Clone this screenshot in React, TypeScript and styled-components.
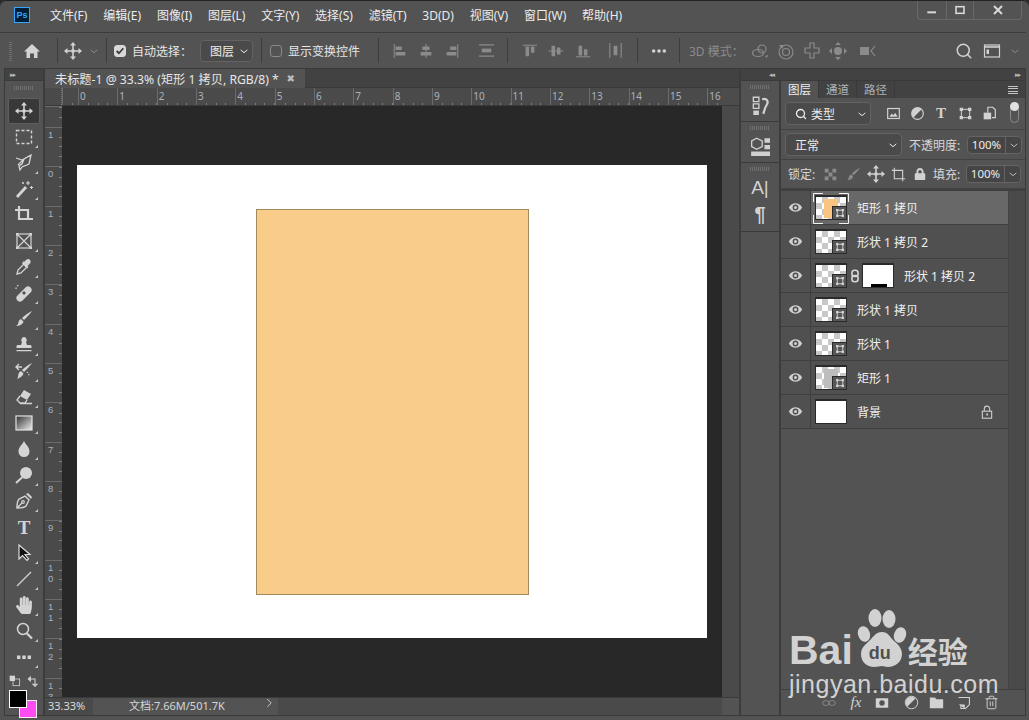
import React from 'react'
import styled, { createGlobalStyle } from 'styled-components'
import { FaHandPaper, FaLock } from 'react-icons/fa'
import { Search, Trash2 } from 'lucide-react'

const GlobalStyle = createGlobalStyle`
  html, body { margin: 0; padding: 0; background: #2b2b2b; }
  * { box-sizing: border-box; }
`

const UI_FONT = `"Noto Sans", "Noto Sans CJK SC", sans-serif`

const Frame = styled.div`
  position: relative;
  width: 1029px;
  height: 720px;
  overflow: hidden;
  display: flex;
  flex-direction: column;
  background: #535353;
  border-radius: 6px 6px 0 0;
  box-shadow: inset 0 1px 0 #222;
  color: #e6e6e6;
  font: 12px ${UI_FONT};
`

/* title bar */
const TitleBar = styled.div`
  height: 33px;
  flex: none;
  display: flex;
  align-items: flex-start;
  padding-left: 14px;
  border-bottom: 1px solid #3c3c3c;
  margin-right: 3px;
`
const PsLogo = styled.div`
  width: 16px;
  height: 16px;
  margin-top: 7px;
  border: 1px solid #31a8ff;
  background: #001e36;
  color: #31a8ff;
  font: 700 9px/14px 'Liberation Sans', sans-serif;
  text-align: center;
`
const Menu = styled.div`
  display: flex;
  gap: 15.8px;
  margin-left: 20px;
  padding-top: 7px;
`
const MenuItem = styled.span`
  line-height: 17px;
  font-size: 12px;
  color: #ececec;
`
const WindowButtons = styled.div`
  margin-left: auto;
  margin-top: 1px;
  margin-right: 4px;
  height: 19px;
  display: flex;
  border: 1px solid #686868;
  border-top: none;
  border-radius: 0 0 4px 4px;
`
const WinBtn = styled.div<{ $w: number }>`
  width: ${p => p.$w}px;
  display: flex;
  align-items: center;
  justify-content: center;
  color: #d8d8d8;
  & + & { border-left: 1px solid #686868; }
`

/* options bar */
const OptionsBar = styled.div`
  height: 36px;
  flex: none;
  margin: 0 3px 0 4px;
  padding-left: 5px;
  display: flex;
  align-items: center;
  border-bottom: 1px solid #3a3a3a;
`
const Grip = styled.div`
  width: 3px;
  height: 20px;
  background: repeating-linear-gradient(0deg, #6e6e6e 0 1px, transparent 1px 2px);
`
const Slot = styled.div<{ $w: number; $ml?: number; $dim?: boolean }>`
  width: ${p => p.$w}px;
  margin-left: ${p => p.$ml ?? 0}px;
  flex: none;
  display: flex;
  align-items: center;
  justify-content: center;
  color: ${p => (p.$dim ? '#8b8b8b' : '#d2d2d2')};
`
const Sep = styled.div<{ $ml?: number }>`
  width: 1px;
  height: 25px;
  flex: none;
  margin-left: ${p => p.$ml ?? 0}px;
  background: #3d3d3d;
`
const Check = styled.div<{ $ml: number; $on?: boolean }>`
  width: 12px;
  height: 12px;
  flex: none;
  margin-left: ${p => p.$ml}px;
  border-radius: 3px;
  border: 1px solid ${p => (p.$on ? '#d8d8d8' : '#8a8a8a')};
  background: ${p => (p.$on ? '#d8d8d8' : 'transparent')};
  color: #3a3a3a;
  display: flex;
  align-items: center;
  justify-content: center;
`
const OptLabel = styled.span<{ $ml: number; $w: number; $dim?: boolean }>`
  margin-left: ${p => p.$ml}px;
  width: ${p => p.$w}px;
  flex: none;
  white-space: nowrap;
  color: ${p => (p.$dim ? '#8b8b8b' : '#e6e6e6')};
`
const SelectBox = styled.div<{ $w: number; $ml?: number; $h?: number }>`
  width: ${p => p.$w}px;
  height: ${p => p.$h ?? 22}px;
  margin-left: ${p => p.$ml ?? 0}px;
  flex: none;
  padding: 0 3px 0 9px;
  display: flex;
  align-items: center;
  gap: 4px;
  white-space: nowrap;
  background: #4a4a4a;
  border: 1px solid #636363;
  border-radius: 4px;
  color: #ececec;
  & > svg:last-child { margin-left: auto; }
`

/* main area */
const Main = styled.div`
  flex: 1;
  min-height: 0;
  margin: 0 3px 4px 4px;
  display: flex;
  border-left: 1px solid #3a3a3a;
  border-bottom: 1px solid #3a3a3a;
`
const ToolColumn = styled.div`
  width: 40px;
  flex: none;
  display: flex;
  flex-direction: column;
  align-items: center;
  border-right: 2px solid #3c3c3c;
`
const DockHeader = styled.div<{ $align?: string }>`
  height: 12px;
  flex: none;
  width: 100%;
  display: flex;
  align-items: center;
  justify-content: ${p => p.$align ?? 'flex-start'};
  padding: 0 5px;
  background: #424242;
  color: #b8b8b8;
  font: 7px/12px 'DejaVu Sans', sans-serif;
  letter-spacing: -1px;
  border-bottom: 1px solid #3a3a3a;
`
const CollapseLeft = styled.span`
  margin-left: 23px;
`
const ToolGrip = styled.div`
  width: 20px;
  height: 4px;
  margin: 5px 0 8px;
  flex: none;
  background: repeating-linear-gradient(90deg, #6f6f6f 0 1px, transparent 1px 2px);
`
const ToolBtn = styled.div<{ $active?: boolean }>`
  position: relative;
  width: 32px;
  height: 26px;
  flex: none;
  display: flex;
  align-items: center;
  justify-content: center;
  color: #d4d4d4;
  border-radius: 3px;
  background: ${p => (p.$active ? '#383838' : 'transparent')};
  box-shadow: ${p => (p.$active ? 'inset 0 0 0 1px #5f5f5f' : 'none')};
`
const Corner = styled.span`
  position: absolute;
  right: 2px;
  bottom: 2px;
  width: 0;
  height: 0;
  border-left: 3px solid transparent;
  border-bottom: 3px solid #c4c4c4;
`
const ToolT = styled.span<{ $size?: number }>`
  font: 700 ${p => p.$size ?? 19}px/${p => p.$size ?? 19}px 'Liberation Serif', serif;
`
const Swaps = styled.div`
  display: flex;
  align-items: center;
  gap: 6px;
  margin-top: 5px;
  color: #d4d4d4;
`
const Colors = styled.div`
  position: relative;
  width: 28px;
  height: 28px;
  margin-top: 3px;
  align-self: flex-start;
  margin-left: 4px;
`
const BgSwatch = styled.div`
  position: absolute;
  left: 10px;
  top: 10px;
  width: 18px;
  height: 18px;
  background: #ff4bf2;
  border: 1px solid #eee;
`
const FgSwatch = styled.div`
  position: absolute;
  left: 0;
  top: 0;
  width: 18px;
  height: 18px;
  background: #000;
  border: 1px solid #fff;
`

/* document */
const Doc = styled.div`
  width: 696px;
  flex: none;
  display: flex;
  flex-direction: column;
  border-right: 2px solid #3c3c3c;
`
const TabBar = styled.div`
  height: 19px;
  flex: none;
  display: flex;
  background: #424242;
  border-bottom: 1px solid #3a3a3a;
`
const Tab = styled.div`
  width: 260px;
  height: 19px;
  padding: 0 10px;
  display: flex;
  align-items: center;
  justify-content: space-between;
  background: #535353;
  font-size: 12.2px;
  white-space: nowrap;
`
const TabClose = styled.span`
  color: #bdbdbd;
  font: 700 10px 'DejaVu Sans', sans-serif;
`
const RulerRow = styled.div`
  height: 18px;
  flex: none;
  display: flex;
  border-bottom: 1px solid #3a3a3a;
`
const RulerCorner = styled.div`
  width: 17px;
  flex: none;
  background: #4a4a4a;
  border-right: 1px dotted #777;
`
const TopRuler = styled.div`
  width: 660px;
  flex: none;
  overflow: hidden;
  display: flex;
  background: #4a4a4a;
`
const TopCell = styled.div<{ $w: number }>`
  width: ${p => p.$w}px;
  flex: none;
  padding-left: 1px;
  color: #aab2bc;
  font: 10px/16px ${UI_FONT};
  border-left: 1px solid #6b6b6b;
  background: repeating-linear-gradient(90deg, transparent 0 8.8px, #7d7d7d 8.8px 9.83px) 0 100% / 100% 2px no-repeat;
`
const RulerGutter = styled.div`
  flex: 1;
  background: #4c4c4c;
`
const DocBody = styled.div`
  flex: 1;
  min-height: 0;
  display: flex;
`
const LeftRuler = styled.div`
  width: 17px;
  flex: none;
  overflow: hidden;
  background: #4a4a4a;
`
const LeftCell = styled.div<{ $h: number }>`
  height: ${p => p.$h}px;
  width: 17px;
  padding: 1px 0 0 3px;
  color: #aab2bc;
  font: 9.5px/11px 'Liberation Sans', sans-serif;
  border-top: 1px solid #6b6b6b;
  background: repeating-linear-gradient(0deg, transparent 0 8.8px, #7d7d7d 8.8px 9.83px) 100% 0 / 3px 100% no-repeat;
`
const Digit = styled.div``
const Pasteboard = styled.div`
  width: 660px;
  flex: none;
  display: flex;
  align-items: center;
  justify-content: center;
  background: #282828;
`
const Canvas = styled.div`
  width: 630px;
  height: 473px;
  padding-top: 1px;
  display: flex;
  align-items: center;
  justify-content: center;
  background: #fff;
`
const ShapeRect = styled.div`
  width: 273px;
  height: 386px;
  background: #f9cd89;
  border: 1px solid #a08a5e;
`
const ScrollGutter = styled.div`
  flex: 1;
  background: #4a4a4a;
`
const StatusBar = styled.div`
  height: 18px;
  flex: none;
  display: flex;
  background: #4a4a4a;
  border-top: 1px solid #3a3a3a;
  font-size: 11px;
  line-height: 16px;
`
const Zoom = styled.div`
  width: 48px;
  padding-left: 3px;
  color: #dcdcdc;
`
const DocInfo = styled.div`
  width: 185px;
  padding-left: 36px;
  background: #535353;
  color: #d6d6d6;
  display: flex;
  justify-content: space-between;
  padding-right: 4px;
`
const StatusRest = styled.div`
  flex: 1;
  background: #4a4a4a;
  border-right: 17px solid #535353;
`

/* docks */
const Docks = styled.div`
  flex: 1;
  min-width: 0;
  display: flex;
  flex-direction: column;
  border-right: 1px solid #3a3a3a;
`
const DockBody = styled.div`
  flex: 1;
  min-height: 0;
  display: flex;
`
const Strip = styled.div`
  width: 40px;
  flex: none;
  display: flex;
  flex-direction: column;
  border-right: 2px solid #3c3c3c;
`
const StripGroup = styled.div<{ $h: number }>`
  height: ${p => p.$h}px;
  flex: none;
  display: flex;
  flex-direction: column;
  align-items: center;
  border-bottom: 1px solid #3a3a3a;
  color: #d0d0d0;
`
const StripGrip = styled(ToolGrip)`
  margin: 4px 0 6px;
`
const CharGlyph = styled.span<{ $mt: number; $bold?: boolean }>`
  margin-top: ${p => p.$mt}px;
  color: #d2d2d2;
  font: ${p => (p.$bold ? '700 20px/20px' : '400 19px/20px')} 'Liberation Sans', sans-serif;
`
const Panel = styled.div`
  flex: 1;
  min-width: 0;
  display: flex;
  flex-direction: column;
`
const Tabs = styled.div`
  height: 17px;
  flex: none;
  display: flex;
  align-items: stretch;
  background: #424242;
`
const PanelTab = styled.div<{ $active?: boolean }>`
  width: 38px;
  text-align: center;
  line-height: 17px;
  font-size: 11.5px;
  color: ${p => (p.$active ? '#f0f0f0' : '#aeb4ba')};
  background: ${p => (p.$active ? '#535353' : 'transparent')};
  border-right: 1px solid #3a3a3a;
`
const TabMenu = styled.div`
  margin: 5px 7px 0 auto;
  width: 10px;
  height: 8px;
  background: repeating-linear-gradient(0deg, #c4c4c4 0 1px, transparent 1px 2.4px);
`
const PanelRow = styled.div<{ $h: number }>`
  height: ${p => p.$h}px;
  flex: none;
  display: flex;
  align-items: center;
  padding-left: 4px;
  border-bottom: 1px solid #424242;
  color: #d8d8d8;
`
const FilterIcons = styled.div`
  display: flex;
  margin-left: 10px;
`
const Toggle = styled.div`
  position: relative;
  width: 9px;
  height: 19px;
  margin-left: 9px;
  border-radius: 5px;
  border: 1px solid #8a8a8a;
`
const ToggleKnob = styled.span`
  position: absolute;
  left: -1px;
  top: -3px;
  width: 9px;
  height: 9px;
  border-radius: 50%;
  background: #e2e2e2;
`
const FieldLabel = styled.span<{ $ml: number; $w: number }>`
  margin-left: ${p => p.$ml}px;
  width: ${p => p.$w}px;
  flex: none;
  white-space: nowrap;
`
const NumberField = styled.div`
  width: 55px;
  height: 18px;
  margin-left: 3px;
  flex: none;
  display: flex;
  background: #454545;
  border: 1px solid #646464;
  border-radius: 4px;
  font-size: 11.5px;
  line-height: 16px;
  color: #ececec;
`
const NumberValue = styled.span`
  width: 38px;
  text-align: center;
  border-right: 1px solid #646464;
`
const NumberArrow = styled.span`
  flex: 1;
  display: flex;
  align-items: center;
  justify-content: center;
  color: #b8b8b8;
`
const LockIcons = styled.div`
  display: flex;
  margin-left: 1px;
`
const ListArea = styled.div`
  flex: 1;
  min-height: 0;
  display: flex;
  border-top: 2px solid #3f3f3f;
`
const LayerList = styled.div`
  width: 227px;
  flex: none;
`
const ListGutter = styled.div`
  flex: 1;
  background: #4a4a4a;
  border-left: 1px solid #444;
`
const Row = styled.div<{ $selected?: boolean }>`
  height: 34px;
  display: flex;
  align-items: center;
  background: ${p => (p.$selected ? '#686868' : '#505050')};
  border-bottom: 1px solid #3f3f3f;
  font-size: 12px;
  color: #f0f0f0;
  white-space: nowrap;
`
const EyeCell = styled.div`
  width: 30px;
  height: 100%;
  flex: none;
  display: flex;
  align-items: center;
  justify-content: center;
  color: #d0d0d0;
  background: #505050;
  border-right: 1px solid #3f3f3f;
`
const Thumb = styled.div<{ $plain?: boolean; $ml?: number }>`
  position: relative;
  width: 32px;
  height: 25px;
  flex: none;
  margin-left: ${p => p.$ml ?? 4}px;
  border: 1px solid #2a2a2a;
  border-top-width: 2px;
  background: ${p =>
    p.$plain ? '#fff' : 'repeating-conic-gradient(#c8c8c8 0 25%, #fff 0 50%) 0 0 / 12px 12px'};
`
const ThumbFill = styled.span<{ $color: string }>`
  position: absolute;
  left: 8px;
  top: 2px;
  width: 14px;
  height: 19px;
  background: ${p => p.$color};
`
const Badge = styled.span`
  position: absolute;
  right: -1px;
  bottom: -1px;
  width: 15px;
  height: 14px;
  display: flex;
  align-items: center;
  justify-content: center;
  background: #575757;
  border: 1px solid #2a2a2a;
  color: #d8d8d8;
`
const MaskBar = styled.span`
  position: absolute;
  left: 8px;
  bottom: 0;
  width: 16px;
  height: 3px;
  background: #000;
`
const Brackets = styled.svg`
  position: absolute;
  left: -3px;
  top: -4px;
  width: 36px;
  height: 31px;
  fill: none;
  stroke: #f2f2f2;
`
const Chain = styled.span`
  width: 15px;
  flex: none;
  display: flex;
  justify-content: center;
  color: #d8d8d8;
`
const LayerName = styled.span<{ $ml?: number }>`
  margin-left: ${p => p.$ml ?? 10}px;
`
const LayerLock = styled.span`
  margin-left: auto;
  margin-right: 14px;
  color: #cfcfcf;
  display: flex;
`
const PanelFooter = styled.div`
  height: 26px;
  flex: none;
  display: flex;
  align-items: center;
  padding-left: 41px;
  border-top: 1px solid #3f3f3f;
  background: #535353;
  color: #d8d8d8;
`
const FooterFx = styled.span`
  font: italic 15px 'Liberation Serif', serif;
`

/* watermark */
const Watermark = styled.div`
  position: absolute;
  left: 789px;
  top: 609px;
  width: 190px;
  color: #d2d2d2;
  pointer-events: none;
`
const MarkTop = styled.div`
  display: flex;
  align-items: flex-end;
  height: 60px;
`
const MarkBai = styled.span`
  font: 700 41px/38px 'Liberation Sans', sans-serif;
`
const MarkPaw = styled.div`
  position: relative;
  width: 52px;
  height: 60px;
  margin-left: 2px;
  flex: none;
`
const PawSvg = styled.svg`
  display: block;
  width: 52px;
  height: 60px;
  fill: currentColor;
`
const MarkDu = styled.span`
  position: absolute;
  left: 14px;
  top: 35px;
  color: #4f4f4f;
  font: 700 18px/18px 'Liberation Sans', sans-serif;
`
const MarkJy = styled.span`
  margin-left: 1px;
  font: 700 30px/38px 'Noto Sans CJK SC', sans-serif;
`
const MarkUrl = styled.div`
  margin-top: 2px;
  font: 25px/26px 'Liberation Sans', sans-serif;
  letter-spacing: 0.5px;
  white-space: nowrap;
`

const Svg = styled.svg.attrs<{ $s?: number }>(p => ({ viewBox: '0 0 18 18', width: p.$s ?? 18, height: p.$s ?? 18 }))<{ $s?: number }>`
  display: block;
  flex: none;
  fill: none;
  stroke: currentColor;
  stroke-width: 1.2;
`
const Solid = { fill: 'currentColor', stroke: 'none' }

const Chevron = () => (
  <Svg $s={10}>
    <path d="M3 7l6 5 6-5" strokeWidth={1.8} />
  </Svg>
)
const MoveIcon = () => (
  <Svg>
    <path d="M9 2v14M2 9h14" strokeWidth={1.6} />
    <path {...Solid} d="M9 0l3 3.500H6zM9 18l3-3.500H6zM0 9l3.500-3v6zM18 9l-3.500-3v6z" />
    <rect {...Solid} x="7.500" y="7.500" width="3" height="3" />
  </Svg>
)
const PathBox = ({ s = 12 }: { s?: number }) => (
  <Svg $s={s}>
    <rect x="4" y="4" width="10" height="10" strokeWidth={s < 14 ? 1.6 : 1.2} />
    <path {...Solid} d="M2 2h4v4H2zM12 2h4v4h-4zM2 12h4v4H2zM12 12h4v4h-4z" />
  </Svg>
)

const toolIcons: React.ReactNode[] = [
  <MoveIcon key="move" />,
  <Svg key="marquee"><rect x="1.500" y="2.500" width="15" height="13" strokeDasharray="3 2" strokeWidth={1.4} /></Svg>,
  <Svg key="lasso"><path d="M1 4l6 2 9-5-2 9-7 3-2 3-1-4 3-2 2-5-6 6" strokeWidth={1.3} /></Svg>,
  <Svg key="wand">
    <path d="M2 17L11 7" strokeWidth={2.8} />
    <path d="M13 1v4M11 3h4M16.500 6v3M15 7.500h3M8 2v2M7 3h2" strokeWidth={1.1} />
  </Svg>,
  <Svg key="crop"><path d="M0 4h13v10M4 0v13h14" strokeWidth={2.2} /></Svg>,
  <Svg key="frame">
    <rect x="2" y="2" width="14" height="14" />
    <path d="M2 2l14 14M16 2L2 16" />
    <path {...Solid} d="M1 1h2.500v2.500H1zM14.500 1H17v2.500h-2.500zM1 14.500h2.500V17H1zM14.500 14.500H17V17h-2.500z" />
  </Svg>,
  <Svg key="dropper">
    <path d="M2 16l1-4 6-6 3 3-6 6z" strokeWidth={1.3} />
    <path {...Solid} d="M9 4l2-2c1.500-1.500 3-1.500 4 0s1 2.500-.5 4l-2 2 1 1-1.500 1.500-5-5L8.500 3z" />
  </Svg>,
  <Svg key="heal">
    <path {...Solid} fillRule="evenodd" d="M2 12l9-9c1-1 3-1 4 0l1 1c1 1 1 3 0 4l-9 9c-1 1-3 1-4 0l-1-1c-1-1-1-3 0-4zM9 7l-2 2 2 2 2-2z" />
    <path d="M1 5a4 4 0 0 1 4-4" strokeDasharray="1.500 1.500" />
  </Svg>,
  <Svg key="brush">
    <path {...Solid} d="M17 1c-2 3-5 6-8 9l-2-2c3-3 6-5 10-7zM6 9l2.500 2.500C8 14 5 16 1 16c2-1 2-2 2.500-4 .3-1.500 1.200-2.500 2.500-3z" />
  </Svg>,
  <Svg key="stamp">
    <path {...Solid} d="M9 1a3 3 0 0 1 2 5l1 3h3c1 0 1.500.5 1.500 1.500V12h-15v-1.500C1.500 9.500 2 9 3 9h3l1-3a3 3 0 0 1 2-5zM1.500 14h15v1.300h-15z" />
  </Svg>,
  <Svg key="history">
    <path {...Solid} d="M17 1c-2 3-5 6-8 9l-2-2c3-3 6-5 10-7zM6 9l2.500 2.500C8 14 5 16 2 17c1-1 1-3 1.500-5 .3-1.500 1.200-2.500 2.500-3z" />
    <path d="M1 5h6M4 2L1 5l3 3" strokeWidth={1.4} />
    <path d="M12 10a5 5 0 0 1 2 5" strokeDasharray="1.200 1.500" />
  </Svg>,
  <Svg key="eraser">
    <path {...Solid} d="M9 2l7 4-4 6-7-4z" />
    <path d="M5 8l-3 4 3 3h5l2-3M5 15.500h12" strokeWidth={1.3} />
  </Svg>,
  <Svg key="gradient">
    <defs>
      <linearGradient id="toolGrad" x1="0" x2="1" y1="0" y2="1">
        <stop offset="0" stopColor="#2e2e2e" />
        <stop offset="1" stopColor="#f0f0f0" />
      </linearGradient>
    </defs>
    <rect x="1" y="2" width="16" height="14" fill="url(#toolGrad)" stroke="#e2e2e2" />
  </Svg>,
  <Svg key="drop"><path {...Solid} d="M9 1c2 4 5.500 6 5.500 10.500a5.500 5.500 0 0 1-11 0C3.500 7 7 5 9 1z" /></Svg>,
  <Svg key="dodge">
    <circle {...Solid} cx="11" cy="7" r="6" />
    <path d="M7 11.500L1 17" strokeWidth={2} />
  </Svg>,
  <Svg key="pen">
    <path d="M2 16c0-4 0-7 2-9l6-3 4 4-3 6c-2 2-5 2-9 2zM2 16l5-5" strokeWidth={1.4} />
    <circle cx="8" cy="10" r="1.300" />
    <path {...Solid} d="M11 2l2-1 4 4-1 2z" />
  </Svg>,
  <ToolT key="type">T</ToolT>,
  <Svg key="select"><path d="M4 1v14l3.500-3.500 4.500 5 1.500-1.500-3.500-4.500H15z" fill="#111" stroke="#ddd" /></Svg>,
  <Svg key="line"><path d="M2 16L16 2" strokeWidth={1.3} /></Svg>,
  <FaHandPaper key="hand" size={18} />,
  <Svg key="zoom">
    <circle cx="8" cy="7" r="5.500" strokeWidth={1.5} />
    <path d="M12 11.500l5 5" strokeWidth={2.2} />
  </Svg>,
  <Svg key="more"><path {...Solid} d="M2 7.500h3.400v3.400H2zM7.300 7.500h3.400v3.400H7.300zM12.600 7.500H16v3.400h-3.400z" /></Svg>,
]
const noCorner = new Set([0, 4, 16])

const Eye = () => (
  <Svg $s={15}>
    <path {...Solid} fillRule="evenodd" d="M1 9c2-3.500 5-5 8-5s6 1.500 8 5c-2 3.500-5 5-8 5s-6-1.500-8-5zm8-3.500a3.500 3.500 0 1 0 0 7 3.500 3.500 0 0 0 0-7z" />
    <circle {...Solid} cx="9" cy="9" r="1.800" />
  </Svg>
)

type LayerRow = { name: string; selected?: boolean; fill?: string; mask?: boolean; plain?: boolean }
const layers: LayerRow[] = [
  { name: '矩形 1 拷贝', selected: true, fill: '#fac580' },
  { name: '形状 1 拷贝 2' },
  { name: '形状 1 拷贝 2', mask: true },
  { name: '形状 1 拷贝' },
  { name: '形状 1' },
  { name: '矩形 1', fill: '#bdbdbd' },
  { name: '背景', plain: true },
]

const menus = ['文件(F)', '编辑(E)', '图像(I)', '图层(L)', '文字(Y)', '选择(S)', '滤镜(T)', '3D(D)', '视图(V)', '窗口(W)', '帮助(H)']
const rulerNums = Array.from({ length: 17 }, (_, i) => i)
const sideNums = ['1', '0', '1', '2', '3', '4', '5', '6', '7', '8', '9', '10', '11', '12', '13']

export default function App() {
  return (
    <Frame>
      <GlobalStyle />
      <TitleBar>
        <PsLogo>Ps</PsLogo>
        <Menu>
          {menus.map(m => (
            <MenuItem key={m}>{m}</MenuItem>
          ))}
        </Menu>
        <WindowButtons>
          <WinBtn $w={28}>
            <Svg $s={12}><path {...Solid} d="M2 11h13v3H2z" /></Svg>
          </WinBtn>
          <WinBtn $w={27}>
            <Svg $s={12}><rect x="3" y="4" width="12" height="10" strokeWidth={2.4} /></Svg>
          </WinBtn>
          <WinBtn $w={48}>
            <Svg $s={12}><path d="M3 3l12 12M15 3L3 15" strokeWidth={3} /></Svg>
          </WinBtn>
        </WindowButtons>
      </TitleBar>

      <OptionsBar>
        <Grip />
        <Slot $w={40}>
          <Svg><path {...Solid} d="M9 2l8 7.500h-2.500V16h-3.500v-4.500H7V16H3.500V9.500H1z" /></Svg>
        </Slot>
        <Sep $ml={5} />
        <Slot $w={30}><MoveIcon /></Slot>
        <Slot $w={12} $dim><Chevron /></Slot>
        <Sep $ml={6} />
        <Check $ml={7} $on>
          <Svg $s={10}><path d="M3 9l4 4 8-9" strokeWidth={3.2} /></Svg>
        </Check>
        <OptLabel $ml={6} $w={54}>自动选择：</OptLabel>
        <SelectBox $ml={14} $w={53}>
          图层
          <Chevron />
        </SelectBox>
        <Sep $ml={8} />
        <Check $ml={8} />
        <OptLabel $ml={6} $w={70}>显示变换控件</OptLabel>
        <Sep $ml={20} />
        <Slot $w={26} $ml={8} $dim><Svg $s={16}><path d="M2.500 1v16" /><path {...Solid} d="M4 4h7v4H4zM4 10h11v4H4z" /></Svg></Slot>
        <Slot $w={26} $dim><Svg $s={16}><path d="M9 1v16" /><path {...Solid} d="M5 4h8v4H5zM3 10h12v4H3z" /></Svg></Slot>
        <Slot $w={26} $dim><Svg $s={16}><path d="M15.500 1v16" /><path {...Solid} d="M7 4h7v4H7zM3 10h11v4H3z" /></Svg></Slot>
        <Slot $w={26} $ml={8} $dim><Svg $s={17}><path d="M1 3h16M1 15h16" /><path {...Solid} d="M4 7h10v4H4z" /></Svg></Slot>
        <Sep $ml={8} />
        <Slot $w={26} $ml={9} $dim><Svg $s={16}><path d="M1 2.500h16" /><path {...Solid} d="M4 4h4v11H4zM10 4h4v7h-4z" /></Svg></Slot>
        <Slot $w={26} $dim><Svg $s={16}><path d="M1 9h16" /><path {...Solid} d="M4 3h4v12H4zM10 5h4v8h-4z" /></Svg></Slot>
        <Slot $w={26} $ml={1} $dim><Svg $s={16}><path d="M1 15.500h16" /><path {...Solid} d="M4 3h4v11H4zM10 7h4v7h-4z" /></Svg></Slot>
        <Slot $w={26} $ml={6} $dim><Svg $s={17}><path d="M3 1v16M15 1v16" /><path {...Solid} d="M7 4h4v10H7z" /></Svg></Slot>
        <Sep $ml={9} />
        <Slot $w={41}><Svg $s={16}><path {...Solid} d="M1 9a2 2 0 1 0 4 0 2 2 0 0 0-4 0zM7 9a2 2 0 1 0 4 0 2 2 0 0 0-4 0zM13 9a2 2 0 1 0 4 0 2 2 0 0 0-4 0z" /></Svg></Slot>
        <Sep />
        <OptLabel $ml={9} $w={50} $dim>3D 模式：</OptLabel>
        <Slot $w={26} $ml={8} $dim><Svg><ellipse cx="7" cy="11" rx="5.500" ry="3.500" /><circle cx="11" cy="7" r="4" /><path {...Solid} d="M14 14l3-1-1 3z" /></Svg></Slot>
        <Slot $w={26} $dim><Svg><circle cx="9" cy="10" r="7" /><circle cx="9" cy="10" r="3.500" /><path {...Solid} d="M2 3l5 0-2 4z" /></Svg></Slot>
        <Slot $w={26} $dim><Svg><path d="M7 1h4v5h5v5h-5v5H7v-5H2V6h5z" /></Svg></Slot>
        <Slot $w={26} $dim><Svg><circle {...Solid} cx="9" cy="9" r="4" /><path {...Solid} d="M9 0l3 3H6zM9 18l3-3H6zM0 9l3-3v6zM18 9l-3-3v6z" /></Svg></Slot>
        <Slot $w={26} $ml={4} $dim><Svg><path {...Solid} d="M1 5h9v8H1z" /><path d="M16 4l-4 5 4 5" /></Svg></Slot>
        <Slot $w={26} $ml={70}><Search size={18} strokeWidth={2} /></Slot>
        <Slot $w={26} $ml={2}>
          <Svg><rect x="1.500" y="3" width="15" height="12" /><path d="M1.500 5h15" strokeWidth={1.6} /><path {...Solid} d="M3.500 7.500H6V12H3.500z" /></Svg>
        </Slot>
        <Slot $w={14} $ml={3} $dim><Chevron /></Slot>
      </OptionsBar>

      <Main>
        <ToolColumn>
          <DockHeader>▸▸</DockHeader>
          <ToolGrip />
          {toolIcons.map((icon, i) => (
            <ToolBtn key={i} $active={i === 0}>
              {icon}
              {!noCorner.has(i) && <Corner />}
            </ToolBtn>
          ))}
          <Swaps>
            <Svg $s={12}><path {...Solid} d="M1 1h8v8H1z" /><rect x="6" y="6" width="10" height="10" /></Svg>
            <Svg $s={12}><path d="M2 6h10v8M12 17l-3-3h6zM2 6l3-3v6z" strokeWidth={1.6} /></Svg>
          </Swaps>
          <Colors>
            <BgSwatch />
            <FgSwatch />
          </Colors>
        </ToolColumn>

        <Doc>
          <TabBar>
            <Tab>
              未标题-1 @ 33.3% (矩形 1 拷贝, RGB/8) *
              <TabClose>✖</TabClose>
            </Tab>
          </TabBar>
          <RulerRow>
            <RulerCorner />
            <TopRuler>
              <TopCell $w={16} />
              {rulerNums.map(n => (
                <TopCell key={n} $w={39.33}>{n}</TopCell>
              ))}
            </TopRuler>
            <RulerGutter />
          </RulerRow>
          <DocBody>
            <LeftRuler>
              <LeftCell $h={21} />
              {sideNums.map((n, i) => (
                <LeftCell key={i} $h={39.33}>
                  {n.split('').map((d, j) => (
                    <Digit key={j}>{d}</Digit>
                  ))}
                </LeftCell>
              ))}
            </LeftRuler>
            <Pasteboard>
              <Canvas>
                <ShapeRect />
              </Canvas>
            </Pasteboard>
            <ScrollGutter />
          </DocBody>
          <StatusBar>
            <Zoom>33.33%</Zoom>
            <DocInfo>
              文档:7.66M/501.7K
              <Svg $s={10}><path d="M6 2l7 7-7 7" strokeWidth={1.6} /></Svg>
            </DocInfo>
            <StatusRest />
          </StatusBar>
        </Doc>

        <Docks>
          <DockHeader $align="space-between">
            <CollapseLeft>◂◂</CollapseLeft>
            <span>▸▸</span>
          </DockHeader>
          <DockBody>
            <Strip>
              <StripGroup $h={41}>
                <StripGrip />
                <Svg $s={20}>
                  <path d="M3 2h5v4H3zM3 8h5v4H3z" />
                  <path {...Solid} d="M3 14h5v5H3z" />
                  <path d="M11 4c4-2 6 2 4 5s-2 5-3 8" strokeWidth={2} />
                </Svg>
              </StripGroup>
              <StripGroup $h={41}>
                <StripGrip />
                <Svg $s={20}>
                  <path d="M6 2l5 2.500v5L6 12 1.500 9.500v-5z" />
                  <path {...Solid} d="M13 2h5v4h-5zM13 8h5v4h-5zM1 14h17v4H1z" />
                </Svg>
              </StripGroup>
              <StripGroup $h={69}>
                <StripGrip />
                <CharGlyph $mt={1}>A|</CharGlyph>
                <CharGlyph $mt={6} $bold>¶</CharGlyph>
              </StripGroup>
            </Strip>
            <Panel>
              <Tabs>
                <PanelTab $active>图层</PanelTab>
                <PanelTab>通道</PanelTab>
                <PanelTab>路径</PanelTab>
                <TabMenu />
              </Tabs>
              <PanelRow $h={32}>
                <SelectBox $w={86} $h={23}>
                  <Search size={12} strokeWidth={2.6} />
                  类型
                  <Chevron />
                </SelectBox>
                <FilterIcons>
                  <Slot $w={24}><Svg $s={15}><rect x="2" y="3" width="14" height="12" strokeWidth={1.4} /><path {...Solid} d="M4 13l3-4 2 2 2-3 3 5z" /></Svg></Slot>
                  <Slot $w={24}><Svg $s={15}><circle cx="9" cy="9" r="7" strokeWidth={1.4} /><path {...Solid} d="M14 4a7 7 0 0 0-9.900 9.900z" /></Svg></Slot>
                  <Slot $w={24}><ToolT $size={15}>T</ToolT></Slot>
                  <Slot $w={24}><PathBox s={15} /></Slot>
                  <Slot $w={24}><Svg $s={15}><path d="M7 8V1.500h6l3 3V14h-4" strokeWidth={1.4} /><path {...Solid} d="M2 8h9v8H2z" /></Svg></Slot>
                </FilterIcons>
                <Toggle>
                  <ToggleKnob />
                </Toggle>
              </PanelRow>
              <PanelRow $h={30}>
                <SelectBox $w={117} $h={23}>
                  正常
                  <Chevron />
                </SelectBox>
                <FieldLabel $ml={7} $w={55}>不透明度:</FieldLabel>
                <NumberField>
                  <NumberValue>100%</NumberValue>
                  <NumberArrow><Chevron /></NumberArrow>
                </NumberField>
              </PanelRow>
              <PanelRow $h={29}>
                <FieldLabel $ml={3} $w={30}>锁定:</FieldLabel>
                <LockIcons>
                  <Slot $w={23} $dim>
                    <Svg $s={13}><path {...Solid} d="M1 1h5.300v5.300H1zM11.700 1H17v5.300h-5.300zM6.300 6.300h5.400v5.400H6.300zM1 11.700h5.300V17H1zM11.700 11.700H17V17h-5.300z" /></Svg>
                  </Slot>
                  <Slot $w={23} $dim>
                    <Svg $s={15}><path {...Solid} d="M17 1c-2 3-5 6-8 9l-2-2c3-3 6-5 10-7zM6 9l2.500 2.500C8 14 5 16 1 16c2-1 2-2 2.500-4 .3-1.500 1.200-2.500 2.500-3z" /></Svg>
                  </Slot>
                  <Slot $w={22}><MoveIcon /></Slot>
                  <Slot $w={22}>
                    <Svg $s={15}><path d="M4 1v13h13M1 4h13v13" strokeWidth={1.3} /></Svg>
                  </Slot>
                  <Slot $w={22}><FaLock size={12} /></Slot>
                </LockIcons>
                <FieldLabel $ml={2} $w={30}>填充:</FieldLabel>
                <NumberField>
                  <NumberValue>100%</NumberValue>
                  <NumberArrow><Chevron /></NumberArrow>
                </NumberField>
              </PanelRow>
              <ListArea>
                <LayerList>
                  {layers.map((l, i) => (
                    <Row key={i} $selected={l.selected}>
                      <EyeCell><Eye /></EyeCell>
                      <Thumb $plain={l.plain}>
                        {l.fill && <ThumbFill $color={l.fill} />}
                        {!l.plain && (
                          <Badge><PathBox s={10} /></Badge>
                        )}
                        {l.selected && (
                          <Brackets viewBox="0 0 36 31">
                            <path d="M.5 9V.5H10M26 .5h9.500V9M.5 22v8.500H10M26 30.500h9.500V22" />
                          </Brackets>
                        )}
                      </Thumb>
                      {l.mask && (
                        <>
                          <Chain>
                            <Svg $s={14}>
                              <rect x="5" y="1.500" width="8" height="8" rx="3.500" strokeWidth={2} />
                              <rect x="5" y="8.500" width="8" height="8" rx="3.500" strokeWidth={2} />
                            </Svg>
                          </Chain>
                          <Thumb $plain $ml={0}>
                            <MaskBar />
                          </Thumb>
                        </>
                      )}
                      <LayerName>{l.name}</LayerName>
                      {l.plain && (
                        <LayerLock>
                          <Svg $s={14}>
                            <rect x="3" y="8" width="12" height="9" strokeWidth={1.4} />
                            <path d="M5.500 8V5a3.500 3.500 0 0 1 7 0v3" strokeWidth={1.4} />
                            <rect {...Solid} x="8" y="11" width="2.400" height="2.400" />
                          </Svg>
                        </LayerLock>
                      )}
                    </Row>
                  ))}
                </LayerList>
                <ListGutter />
              </ListArea>
              <PanelFooter>
                <Slot $w={14} $dim>
                  <Svg $s={14}><rect x="1" y="6" width="8" height="6" rx="3" /><rect x="9" y="6" width="8" height="6" rx="3" /></Svg>
                </Slot>
                <Slot $w={20} $ml={10}><FooterFx>fx</FooterFx></Slot>
                <Slot $w={20} $ml={6}>
                  <Svg $s={14}><path {...Solid} fillRule="evenodd" d="M1 3h16v12H1zM9 5.500a3.500 3.500 0 1 0 0 7 3.500 3.500 0 0 0 0-7z" /></Svg>
                </Slot>
                <Slot $w={20} $ml={9}>
                  <Svg $s={15}><circle cx="9" cy="9" r="7.500" strokeWidth={1.2} /><path {...Solid} d="M14 4a7 7 0 0 0-9.900 9.900z" /></Svg>
                </Slot>
                <Slot $w={20} $ml={5}>
                  <Svg $s={15}><path {...Solid} d="M1 3h6l2 2h8v11H1z" /></Svg>
                </Slot>
                <Slot $w={20} $ml={8}>
                  <Svg $s={14}><path d="M2 2h14v9l-5 5H5V11" strokeWidth={1.4} /><path {...Solid} d="M2 11h8v5z" /></Svg>
                </Slot>
                <Slot $w={20} $ml={7}><Trash2 size={15} strokeWidth={1.5} /></Slot>
              </PanelFooter>
            </Panel>
          </DockBody>
        </Docks>
      </Main>

      <Watermark>
        <MarkTop>
          <MarkBai>Bai</MarkBai>
          <MarkPaw>
            <PawSvg viewBox="0 0 52 60">
              <ellipse cx="9" cy="25" rx="6" ry="8" transform="rotate(-18 9 25)" />
              <ellipse cx="20" cy="9" rx="6.500" ry="9" />
              <ellipse cx="34" cy="10" rx="6.500" ry="9" />
              <ellipse cx="45" cy="26" rx="6" ry="8" transform="rotate(18 45 26)" />
              <path d="M27 23c6 0 8 5 12 9 5 4 8 8 8 13 0 8-7 13-14 13-3 0-4-1-6-1s-4 1-8 1c-7 0-13-5-13-13 0-6 4-9 8-13 4-3 6-9 13-9z" />
            </PawSvg>
            <MarkDu>du</MarkDu>
          </MarkPaw>
          <MarkJy>经验</MarkJy>
        </MarkTop>
        <MarkUrl>jingyan.baidu.com</MarkUrl>
      </Watermark>
    </Frame>
  )
}
